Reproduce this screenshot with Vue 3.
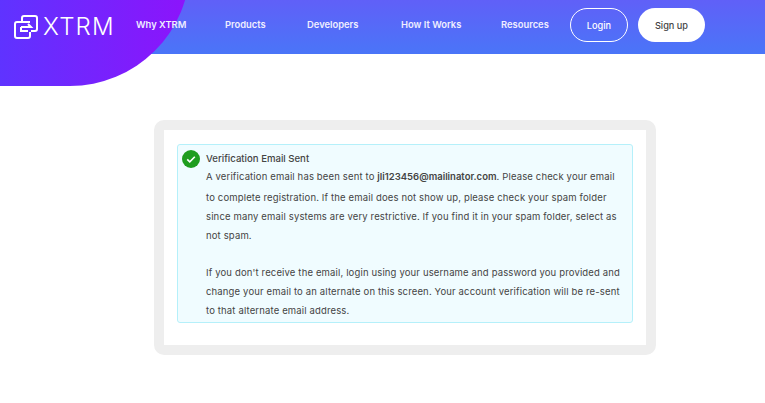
<script setup>
const nav = ['Why XTRM', 'Products', 'Developers', 'How It Works', 'Resources']
</script>

<template>
  <div class="page">
    <header class="header">
      <div class="blob"></div>
      <a class="brand">
        <svg class="mark" width="24" height="24" viewBox="0 0 24 24" fill="none" stroke="#fff" stroke-width="2">
          <path d="M8 7V3a2 2 0 0 1 2-2h11a2 2 0 0 1 2 2v11a2 2 0 0 1-2 2h-4" />
          <path d="M16 7H3a2 2 0 0 0-2 2v12a2 2 0 0 0 2 2h11a2 2 0 0 0 2-2v-4" />
          <path d="M7 12h10l-3-3M7 12v4h7" />
        </svg>
        <span class="word">XTRM</span>
      </a>
      <nav class="nav">
        <a v-for="n in nav" :key="n" class="link">{{ n }}</a>
      </nav>
      <a class="btn login">Login</a>
      <a class="btn signup">Sign up</a>
    </header>
    <main class="main">
      <section class="card">
        <div class="alert">
          <span class="check">
            <svg width="18" height="18" viewBox="0 0 18 18" fill="none">
              <circle cx="9" cy="9" r="9" fill="#1f9d1f" />
              <path d="M5.2 9.3l2.6 2.5 5-5" stroke="#fff" stroke-width="1.6" />
            </svg>
          </span>
          <div class="body">
            <h1 class="title">Verification Email Sent</h1>
            <p class="para">A verification email has been sent to <b>jli123456@mailinator.com</b>. Please check your email<br>to complete registration. If the email does not show up, please check your spam folder<br>since many email systems are very restrictive. If you find it in your spam folder, select as<br>not spam.</p>
            <p class="para gap">If you don't receive the email, login using your username and password you provided and<br>change your email to an alternate on this screen. Your account verification will be re-sent<br>to that alternate email address.</p>
          </div>
        </div>
      </section>
    </main>
  </div>
</template>

<style>
html, body { margin: 0; background: #fff; }
</style>

<style scoped>
.page {
  width: 765px;
  height: 403px;
  overflow: hidden;
  position: relative;
  font-family: Inter, "Open Sans", sans-serif;
  color: #444;
}
.header {
  height: 54px;
  display: flex;
  align-items: flex-start;
  position: relative;
  background: linear-gradient(180deg, #6060f8, #4a75f8);
}
.blob {
  position: absolute;
  left: 0;
  top: -34px;
  width: 190px;
  height: 120px;
  border-bottom-right-radius: 120px;
  background: linear-gradient(90deg, #5f33ff, #8d13fb);
}
.brand {
  position: relative;
  display: flex;
  align-items: center;
  gap: 5px;
  margin: 15px 0 0 14px;
  width: 122px;
  color: #fff;
}
.word {
  font-size: 24px;
  font-weight: 300;
  line-height: 24px;
  letter-spacing: 1.2px;
}
.nav {
  position: relative;
  display: grid;
  grid-template-columns: 89px 82px 94px 100px 48px;
  margin-top: 18px;
  margin-right: 21px;
}
.link {
  font-size: 9.4px;
  font-weight: 600;
  line-height: 14px;
  white-space: nowrap;
  color: #f0eeff;
}
.btn {
  position: relative;
  box-sizing: border-box;
  display: flex;
  align-items: center;
  justify-content: center;
  margin-top: 8px;
  height: 34px;
  padding-top: 1px;
  font-size: 9.2px;
  font-weight: 500;
  border-radius: 17px;
}
.login {
  width: 58px;
  border: 1px solid #fff;
  color: #fff;
  margin-right: 10px;
}
.signup {
  width: 67px;
  background: #fff;
  color: #444;
}
.main {
  display: flex;
  justify-content: center;
  padding: 66px 0 0 45px;
}
.card {
  box-sizing: border-box;
  width: 502px;
  height: 235px;
  border: 10px solid #eeeeee;
  border-radius: 10px;
  padding: 14px 13px;
  background: #fff;
}
.alert {
  box-sizing: border-box;
  height: 179px;
  display: flex;
  gap: 6px;
  padding: 5px 4px;
  background: #f0fcff;
  border: 1px solid #b5f0fa;
  border-radius: 3px;
}
.check { display: block; height: 18px; }
.body { flex: 1; }
.title {
  margin: 0 0 -2px;
  font-size: 9.6px;
  font-weight: 500;
  line-height: 18px;
  color: #444;
}
.para {
  margin: 0;
  font-size: 9.5px;
  line-height: 19px;
  letter-spacing: 0.15px;
  white-space: nowrap;
}
.para b {
  font-weight: 600;
  line-height: 22px;
  letter-spacing: 0;
}
.gap { margin-top: 18px; }
</style>
